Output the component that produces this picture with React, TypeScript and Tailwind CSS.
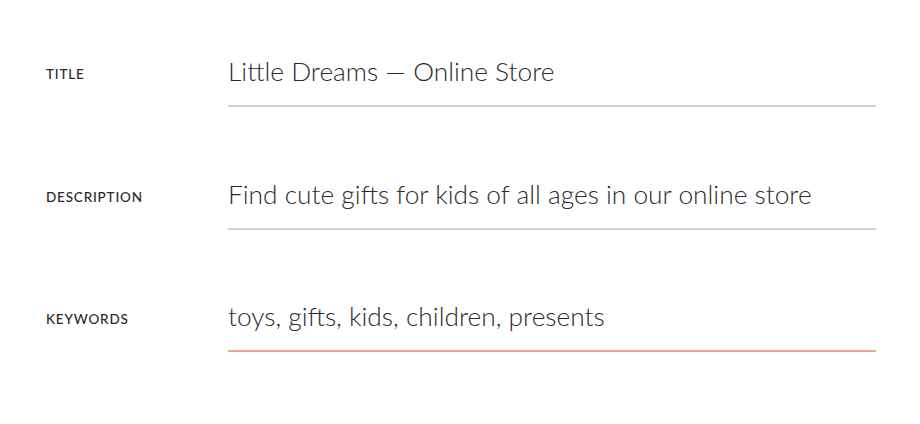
import React from "react";

function Row({ label, value, accent }: { label: string; value: string; accent?: boolean }) {
  return (
    <div className="flex items-start">
      <div className="w-[182px] shrink-0 pt-[15px] text-[13.5px] font-medium tracking-[0.06em] text-[#2a2a2a]">{label}</div>
      <div className="flex-1 flex flex-col">
        <div className="h-[56px] text-[26.3px] font-light text-[#2b2b2b] leading-[44px] whitespace-nowrap">{value}</div>
        {accent ? <div className="h-[2px] bg-[#f2a68f]" /> : <div className="h-[2px] bg-[#d0d0d0]" />}
      </div>
    </div>
  );
}

export default function App() {
  return (
    <div className="w-[920px] h-[424px] bg-white pt-[49px] pl-[46px] pr-[44px] flex flex-col gap-[64.5px]" style={{ fontFamily: "Lato, 'Noto Sans', sans-serif" }}>
      <Row label="TITLE" value="Little Dreams — Online Store" />
      <Row label="DESCRIPTION" value="Find cute gifts for kids of all ages in our online store" />
      <Row label="KEYWORDS" value="toys, gifts, kids, children, presents" accent />
    </div>
  );
}
